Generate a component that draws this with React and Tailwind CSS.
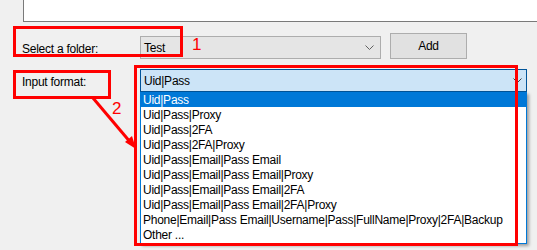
import React from "react";

const items = [
  "Uid|Pass",
  "Uid|Pass|Proxy",
  "Uid|Pass|2FA",
  "Uid|Pass|2FA|Proxy",
  "Uid|Pass|Email|Pass Email",
  "Uid|Pass|Email|Pass Email|Proxy",
  "Uid|Pass|Email|Pass Email|2FA",
  "Uid|Pass|Email|Pass Email|2FA|Proxy",
  "Phone|Email|Pass Email|Username|Pass|FullName|Proxy|2FA|Backup",
  "Other ...",
];

function Chevron({ color }) {
  return (
    <svg width="9" height="5" viewBox="0 0 9 5" className="shrink-0">
      <polyline points="0.5,0.5 4.5,4.5 8.5,0.5" fill="none" stroke={color} strokeWidth="1" />
    </svg>
  );
}

export default function App() {
  return (
    <div
      className="relative w-[537px] h-[250px] overflow-hidden bg-[#f0f0f0] text-[12px] leading-[15px] tracking-[-0.25px] text-black"
      style={{ fontFamily: '"Liberation Sans", Arial, sans-serif' }}
    >
      {/* top text box */}
      <div className="ml-[23px] h-[22px] border-l border-b border-[#7a7a7a] bg-white" />

      {/* folder row */}
      <div className="flex items-start mt-[11px] h-[26px]">
        <div className="w-[140px] pl-[22px] mt-[9px]">Select a folder:</div>
        <div className="mt-[3px] w-[241px] h-[23px] border border-[#adadad] bg-[#e5e5e5] flex items-center justify-between pl-[3px] pr-[6px]">
          <span className="pt-[2px]">Test</span>
          <Chevron color="#606060" />
        </div>
        <div className="ml-[9px] w-[77px] h-[26px] border border-[#adadad] bg-[#e1e1e1] flex items-center justify-center pt-[1px]">
          Add
        </div>
      </div>

      {/* format row */}
      <div className="flex items-start mt-[10px]">
        <div className="w-[140px] pl-[22px] mt-[6px]">Input format:</div>
        <div className="flex flex-col w-[387px]">
          <div className="h-[23px] border border-[#005499] bg-[#cce4f7] flex items-center justify-between pl-[3px] pr-[4px]">
            <span className="pt-[2px]">Uid|Pass</span>
            <Chevron color="#404040" />
          </div>
          <div className="border-x border-b border-[#0078d7] bg-white shadow-[2px_2px_3px_rgba(0,0,0,0.35)] pb-[1px]">
            {items.map((t, i) => (
              <div
                key={t}
                className={
                  i === 0
                    ? "h-[15px] pl-[2px] pt-[1px] bg-[#0078d7] text-white whitespace-nowrap"
                    : "h-[15px] pl-[2px] pt-[1px] whitespace-nowrap"
                }
              >
                <div className="h-[14px] leading-[15px]">{t}</div>
              </div>
            ))}
          </div>
        </div>
      </div>

      {/* annotations */}
      <div className="absolute left-[13px] top-[26px] w-[170px] h-[31px] border-[3px] border-[#ff0000]" />
      <div className="absolute left-[192px] top-[35px] text-[17px] leading-[20px] text-[#ff0000]">1</div>
      <div className="absolute left-[13px] top-[70px] w-[98px] h-[29px] border-[3px] border-[#ff0000]" />
      <div className="absolute left-[112px] top-[99px] text-[17px] leading-[20px] text-[#ff0000]">2</div>
      <div className="absolute left-[134px] top-[65px] w-[384px] h-[181px] border-[3px] border-[#ff0000]" />
      <svg className="absolute left-0 top-0" width="537" height="250" viewBox="0 0 537 250">
        <line x1="93" y1="98" x2="131" y2="143" stroke="#ff0000" strokeWidth="3" />
        <polygon points="136,149 125,142 132,136" fill="#ff0000" />
      </svg>
    </div>
  );
}
